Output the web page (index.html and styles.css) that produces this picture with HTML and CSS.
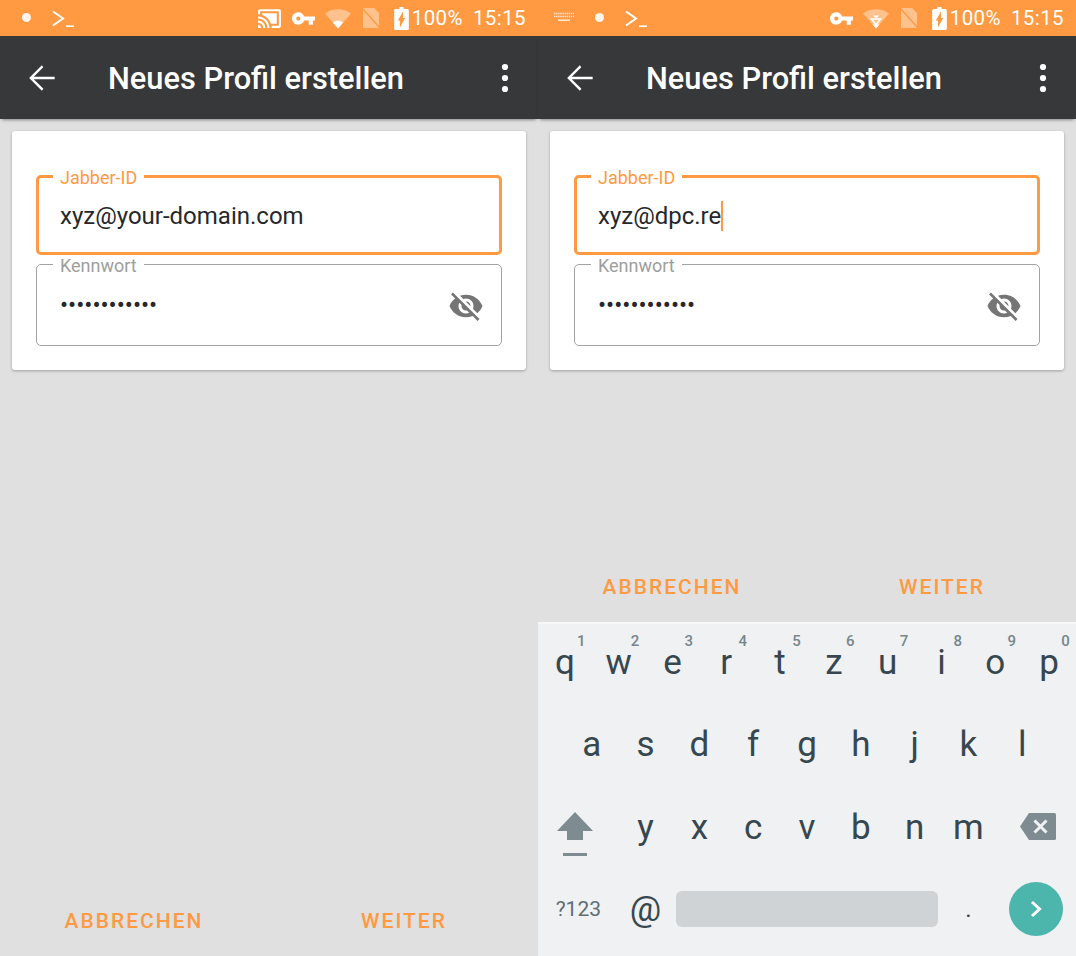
FILE: index.html
```html
<!DOCTYPE html>
<html lang="de">
<head>
<meta charset="utf-8">
<title>Neues Profil erstellen</title>
<link rel="stylesheet" href="styles.css">
</head>
<body>
<svg class="defs" xmlns="http://www.w3.org/2000/svg">
  <symbol id="i-terminal" viewBox="0 0 22 18"><path d="M1 1.500 11 8.500 1 15.500" fill="none" stroke="#fff" stroke-width="2"/><path d="M14 16.200h8" stroke="#fff" stroke-width="1.600"/></symbol>
  <symbol id="i-cast" viewBox="0 0 24 24"><path fill="#fff" d="M21 3H3c-1.100 0-2 .9-2 2v3h2V5h18v14h-7v2h7c1.100 0 2-.9 2-2V5c0-1.100-.9-2-2-2zM1 18v3h3c0-1.660-1.340-3-3-3zm0-4v2c2.760 0 5 2.240 5 5h2c0-3.870-3.130-7-7-7zm0-4v2c4.970 0 9 4.030 9 9h2c0-6.080-4.930-11-11-11z"/><path fill="#fff" d="M19 7H5v1.630c3.960 1.280 7.090 4.410 8.370 8.370H19V7z"/></symbol>
  <symbol id="i-key" viewBox="0 0 24 24"><path fill="#fff" d="M12.650 10C11.830 7.670 9.610 6 7 6c-3.310 0-6 2.690-6 6s2.690 6 6 6c2.610 0 4.830-1.670 5.650-4H17v4h4v-4h2v-4H12.650zM7 14c-1.100 0-2-.9-2-2s.9-2 2-2 2 .9 2 2-.9 2-2 2z"/></symbol>
  <symbol id="i-wifi" viewBox="0 0 26 20"><path fill="#fff" opacity=".4" d="M13 19.500 0 4.600C3.500 1.800 8 .3 13 .3s9.500 1.500 13 4.300z"/><path fill="#fff" d="M13 19.500 7.800 13.400C9.300 12.400 11 11.800 13 11.800s3.700.6 5.200 1.600z"/></symbol>
  <symbol id="i-wifi-data" viewBox="0 0 26 20"><path fill="#fff" opacity=".4" d="M13 19.500 0 4.600C3.500 1.800 8 .3 13 .3s9.500 1.500 13 4.300z"/><path fill="none" stroke="#fff" stroke-width="1.500" d="M8.500 10h9L13 15.800z"/><path fill="#fff" d="M13 19.500 9.500 15.500h7zM10 6.500h6L13 9.500z"/></symbol>
  <symbol id="i-sim" viewBox="0 0 18 20"><path fill="#fff" opacity=".4" d="M1 0h11l5 5v15H1z"/><path stroke="#ff9a42" stroke-width="1.500" d="M0 0 18 20"/></symbol>
  <symbol id="i-battery" viewBox="0 0 14 22"><path fill="#fff" d="M10 2H9V0H5v2H1.300C.6 2 0 2.600 0 3.300v17.400C0 21.400.6 22 1.300 22h11.400c.7 0 1.300-.6 1.300-1.300V3.300C14 2.600 13.400 2 12.700 2zM5.500 19.500v-6.500H3.500L8.500 4v6.500h2z"/></symbol>
  <symbol id="i-keyboard" viewBox="0 0 20 10"><path stroke="#fff" stroke-opacity=".75" stroke-width="1.600" stroke-dasharray="1.400 .7" d="M0 1.500h20M0 4.500h20"/><path stroke="#fff" stroke-opacity=".75" stroke-width="1.600" d="M4 8.200h12"/></symbol>
  <symbol id="i-back" viewBox="0 0 24 24"><path fill="#fff" d="M20 11.200H6.800l6-6L11.900 4l-8 8 8 8 1-1.200-6.100-6H20z"/></symbol>
  <symbol id="i-more" viewBox="0 0 8 30"><circle cx="4" cy="4" r="3.100" fill="#fff"/><circle cx="4" cy="15" r="3.100" fill="#fff"/><circle cx="4" cy="26" r="3.100" fill="#fff"/></symbol>
  <symbol id="i-eye" viewBox="0 0 24 24"><path fill="#757575" d="M12 7c2.760 0 5 2.240 5 5 0 .65-.13 1.260-.36 1.830l2.920 2.920c1.510-1.260 2.700-2.890 3.430-4.750-1.730-4.390-6-7.500-11-7.500-1.400 0-2.740.25-3.980.7l2.160 2.160C10.740 7.130 11.350 7 12 7zM2 4.270l2.280 2.280.46.46C3.080 8.300 1.780 10.020 1 12c1.730 4.390 6 7.500 11 7.500 1.550 0 3.030-.3 4.380-.84l.42.42L19.730 22 21 20.730 3.270 3 2 4.270zM7.530 9.800l1.550 1.550c-.05.21-.08.43-.08.65 0 1.660 1.340 3 3 3 .22 0 .44-.03.65-.08l1.550 1.550c-.67.33-1.410.53-2.200.53-2.760 0-5-2.240-5-5 0-.79.2-1.530.53-2.200zm4.310-.78l3.150 3.150.02-.16c0-1.660-1.340-3-3-3l-.17.01z"/></symbol>
</svg>

<main class="screens">
  <section class="phone">
    <header class="status">
      <span class="dot"></span>
      <svg class="ic-term"><use href="#i-terminal"/></svg>
      <div class="status-right">
        <svg class="ic-cast"><use href="#i-cast"/></svg>
        <svg class="ic-key"><use href="#i-key"/></svg>
        <svg class="ic-wifi"><use href="#i-wifi"/></svg>
        <svg class="ic-sim"><use href="#i-sim"/></svg>
        <svg class="ic-batt"><use href="#i-battery"/></svg>
        <span class="pct">100%</span>
        <span class="time">15:15</span>
      </div>
    </header>
    <div class="toolbar">
      <svg class="ic-back"><use href="#i-back"/></svg>
      <h1 class="title">Neues Profil erstellen</h1>
      <svg class="ic-more"><use href="#i-more"/></svg>
    </div>
    <div class="content">
      <form class="card">
        <fieldset class="field focused">
          <legend>Jabber-ID</legend>
          <div class="value">xyz@your-domain.com</div>
        </fieldset>
        <fieldset class="field">
          <legend>Kennwort</legend>
          <div class="value dots">••••••••••••</div>
          <svg class="ic-eye"><use href="#i-eye"/></svg>
        </fieldset>
      </form>
    </div>
    <div class="actions">
      <span class="action">ABBRECHEN</span>
      <span class="action">WEITER</span>
    </div>
  </section>

  <section class="phone">
    <header class="status">
      <svg class="ic-kbd"><use href="#i-keyboard"/></svg>
      <span class="dot dot-shift"></span>
      <svg class="ic-term"><use href="#i-terminal"/></svg>
      <div class="status-right">
        <svg class="ic-key"><use href="#i-key"/></svg>
        <svg class="ic-wifi"><use href="#i-wifi-data"/></svg>
        <svg class="ic-sim"><use href="#i-sim"/></svg>
        <svg class="ic-batt"><use href="#i-battery"/></svg>
        <span class="pct">100%</span>
        <span class="time">15:15</span>
      </div>
    </header>
    <div class="toolbar">
      <svg class="ic-back"><use href="#i-back"/></svg>
      <h1 class="title">Neues Profil erstellen</h1>
      <svg class="ic-more"><use href="#i-more"/></svg>
    </div>
    <div class="content">
      <form class="card">
        <fieldset class="field focused">
          <legend>Jabber-ID</legend>
          <div class="value">xyz@dpc.re<span class="caret"></span></div>
        </fieldset>
        <fieldset class="field">
          <legend>Kennwort</legend>
          <div class="value dots">••••••••••••</div>
          <svg class="ic-eye"><use href="#i-eye"/></svg>
        </fieldset>
      </form>
    </div>
    <div class="actions">
      <span class="action">ABBRECHEN</span>
      <span class="action">WEITER</span>
    </div>
    <div class="keyboard">
      <div class="row row-letters">
        <span class="key">q<sup class="num">1</sup></span>
        <span class="key">w<sup class="num">2</sup></span>
        <span class="key">e<sup class="num">3</sup></span>
        <span class="key">r<sup class="num">4</sup></span>
        <span class="key">t<sup class="num">5</sup></span>
        <span class="key">z<sup class="num">6</sup></span>
        <span class="key">u<sup class="num">7</sup></span>
        <span class="key">i<sup class="num">8</sup></span>
        <span class="key">o<sup class="num">9</sup></span>
        <span class="key">p<sup class="num">0</sup></span>
      </div>
      <div class="row row-letters row-home">
        <span class="key">a</span><span class="key">s</span><span class="key">d</span><span class="key">f</span><span class="key">g</span><span class="key">h</span><span class="key">j</span><span class="key">k</span><span class="key">l</span>
      </div>
      <div class="row">
        <span class="key key-wide">
          <svg class="ic-shift" viewBox="0 0 36 44"><path fill="#7e8c92" d="M18 0 36 19H26V28H10V19H0z"/><path fill="#7e8c92" d="M6 41h24v3H6z"/></svg>
        </span>
        <span class="key">y</span><span class="key">x</span><span class="key">c</span><span class="key">v</span><span class="key">b</span><span class="key">n</span><span class="key">m</span>
        <span class="key key-wide">
          <svg class="ic-del" viewBox="0 0 36 27"><path fill="#7e8c92" d="M9 0H34.500A1.500 1.500 0 0 1 36 1.500V25.500A1.500 1.500 0 0 1 34.500 27H9L0 13.500z"/><path stroke="#eff1f3" stroke-width="3" d="M14.500 7.500 26.500 19.500M26.500 7.500 14.500 19.500"/></svg>
        </span>
      </div>
      <div class="row row-bottom">
        <span class="key key-wide key-sym">?123</span>
        <span class="key">@</span>
        <span class="key-space"><span class="spacebar"></span></span>
        <span class="key key-dot">.</span>
        <span class="key key-go">
          <span class="go"><svg class="ic-next" viewBox="0 0 12 18"><path d="M2 2 9.500 9 2 16" fill="none" stroke="#fff" stroke-width="3"/></svg></span>
        </span>
      </div>
    </div>
  </section>
</main>
</body>
</html>
```

FILE: styles.css
```css
* { box-sizing: border-box; }
html, body { margin: 0; padding: 0; }
body { font-family: Roboto, "Liberation Sans", sans-serif; background: #e0e0e0; }
.defs { display: none; }

.screens { display: flex; width: 1076px; height: 956px; overflow: hidden; }
.phone { flex: 0 0 538px; display: flex; flex-direction: column; height: 956px; background: #e0e0e0; }

/* status bar */
.status { flex: 0 0 36px; display: flex; align-items: center; background: #ff9a42; color: #fff; padding: 0 12px 0 22px; font-size: 20.500px; }
.dot { width: 9px; height: 9px; border-radius: 50%; background: #fff; opacity: .9; margin-top: -1px; }
.dot-shift { margin-left: 21px; }
.ic-kbd { width: 20px; height: 10px; margin-left: -6px; margin-top: -2px; }
.ic-term { width: 22px; height: 18px; margin-left: 21px; margin-top: 1px; }
.status-right { margin-left: auto; display: flex; align-items: center; }
.ic-cast { width: 25px; height: 25px; margin-right: 9px; }
.ic-key { width: 25px; height: 25px; margin-right: 9px; }
.ic-wifi { width: 26px; height: 20px; margin-right: 11px; margin-top: 2px; }
.ic-sim { width: 18px; height: 20px; margin-right: 14px; }
.ic-batt { width: 15px; height: 23px; margin-right: 3px; }
.pct { margin-right: 10px; }
.pct, .time { line-height: 36px; letter-spacing: .4px; }

/* toolbar */
.toolbar { flex: 0 0 83px; display: flex; align-items: center; background: #37383a; color: #fff; padding: 0 29px; box-shadow: 0 3px 3px -2px rgba(0,0,0,.4); position: relative; }
.ic-back { width: 38px; height: 38px; margin-left: -6px; flex: none; }
.title { margin: 3px 0 0 47px; font-size: 30.800px; font-weight: 500; line-height: 1; }
.ic-more { width: 8px; height: 30px; margin-left: auto; flex: none; }

/* form card */
.content { flex: 1; padding: 12px 12px 0; }
.card { height: 239px; background: #fff; border-radius: 3px; box-shadow: 0 1px 3px rgba(0,0,0,.3); padding: 34.500px 24px 0; display: flex; flex-direction: column; }
.field { position: relative; margin: -1.500px 0 0; min-width: 0; height: 92.500px; padding: 0 23px; border: 1px solid #a3a3a3; border-radius: 5px; }
.field legend { margin-left: -7px; padding: 3px 7px 0; font-size: 18px; line-height: 18px; color: #9e9e9e; }
.field.focused { margin-top: 0; height: 89.500px; padding: 0 21px; border: 3px solid #ff9a42; }
.field.focused legend { color: #ff9a42; }
.value { font-size: 24px; line-height: 30px; color: #25282b; padding-top: 14.500px; }
.field:not(.focused) .value { padding-top: 15.500px; }
.caret { display: inline-block; width: 2px; height: 30px; background: #ff9a42; vertical-align: top; }
.ic-eye { position: absolute; right: 17px; top: 13px; width: 36px; height: 36px; }

/* actions */
.actions { flex: 0 0 70px; display: grid; grid-template-columns: 1fr 1fr; gap: 2px; align-items: center; justify-items: center; }
.action { font-size: 21px; font-weight: 500; letter-spacing: 2px; color: #ff9a42; }

/* keyboard */
.keyboard { flex: 0 0 334px; background: #eff1f3; box-shadow: inset 0 2px 0 #f6f7f8; display: flex; flex-direction: column; }
.row { flex: 0 0 82px; display: flex; }
.row-home { padding-left: 26.900px; }
.row-letters .key { padding-bottom: 2px; }
.key { position: relative; flex: 0 0 53.800px; display: flex; align-items: center; justify-content: center; font-size: 35px; color: #37474f; line-height: 1; }
.key-wide { flex-basis: 80.700px; }
.num { position: absolute; left: 39px; top: 12px; font-size: 15px; font-weight: 500; line-height: 1; color: #78868c; vertical-align: baseline; }
.key-sym { font-size: 21px; color: #5f6e75; }
.key-space { flex: 0 0 269px; display: flex; align-items: center; padding: 0 3.500px; }
.spacebar { display: block; width: 100%; height: 36px; background: #d0d3d6; border-radius: 6px; }
.key-dot { font-size: 24px; }
.key-go { flex-basis: 80.700px; }
.go { width: 54px; height: 54px; border-radius: 50%; background: #4db6ac; display: flex; align-items: center; justify-content: center; }
.ic-next { width: 12px; height: 18px; }
.ic-shift { width: 36px; height: 44px; margin: 14px 0 0 -6px; }
.ic-del { width: 36px; height: 27px; margin: 0 0 2px 4px; }
```
